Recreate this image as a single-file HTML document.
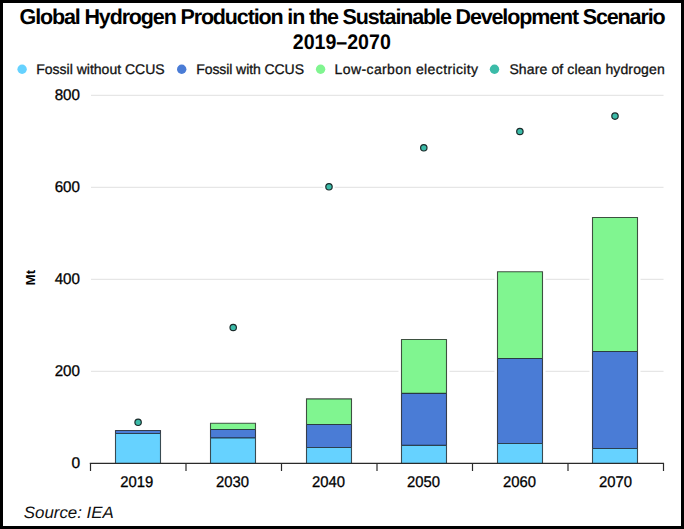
<!DOCTYPE html>
<html><head><meta charset="utf-8"><style>
html,body{margin:0;padding:0;background:#fff;}
body{width:684px;height:529px;overflow:hidden;position:relative;}
svg{position:absolute;left:0;top:0;}
text{font-family:"Liberation Sans", sans-serif;text-rendering:geometricPrecision;}
</style></head><body>
<svg width="684" height="529" viewBox="0 0 684 529">
<rect x="0" y="0" width="684" height="529" fill="#fff"/>

<text x="19.6" y="24" font-weight="bold" font-size="21.5" textLength="646" lengthAdjust="spacing" fill="#000">Global Hydrogen Production in the Sustainable Development Scenario</text>
<text x="292.8" y="49" font-weight="bold" font-size="21" textLength="98" lengthAdjust="spacingAndGlyphs" fill="#000">2019–2070</text>
<circle cx="22.1" cy="69.3" r="4.7" fill="#66d2ff"/>
<text x="36.2" y="73.8" font-size="14" textLength="128.5" lengthAdjust="spacing" fill="#111" stroke="#111" stroke-width="0.3">Fossil without CCUS</text>
<circle cx="181.7" cy="69.3" r="4.7" fill="#4a7cd6"/>
<text x="196.2" y="73.8" font-size="14" textLength="107.8" lengthAdjust="spacing" fill="#111" stroke="#111" stroke-width="0.3">Fossil with CCUS</text>
<circle cx="320.6" cy="69.3" r="4.7" fill="#80f590"/>
<text x="334.6" y="73.8" font-size="14" textLength="143.5" lengthAdjust="spacing" fill="#111" stroke="#111" stroke-width="0.3">Low-carbon electricity</text>
<circle cx="494.5" cy="69.3" r="4.7" fill="#3bbba8"/>
<text x="509.4" y="73.8" font-size="14" textLength="155.3" lengthAdjust="spacing" fill="#111" stroke="#111" stroke-width="0.3">Share of clean hydrogen</text>
<line x1="91" y1="95.3" x2="663.5" y2="95.3" stroke="#e6e6e6" stroke-width="1.2"/>
<line x1="91" y1="187.3" x2="663.5" y2="187.3" stroke="#e6e6e6" stroke-width="1.2"/>
<line x1="91" y1="279.3" x2="663.5" y2="279.3" stroke="#e6e6e6" stroke-width="1.2"/>
<line x1="91" y1="371.3" x2="663.5" y2="371.3" stroke="#e6e6e6" stroke-width="1.2"/>
<text x="80" y="100.1" font-size="15.5" text-anchor="end" textLength="25.3" lengthAdjust="spacingAndGlyphs" fill="#000" stroke="#000" stroke-width="0.3">800</text>
<text x="80" y="192.1" font-size="15.5" text-anchor="end" textLength="25.3" lengthAdjust="spacingAndGlyphs" fill="#000" stroke="#000" stroke-width="0.3">600</text>
<text x="80" y="284.1" font-size="15.5" text-anchor="end" textLength="25.3" lengthAdjust="spacingAndGlyphs" fill="#000" stroke="#000" stroke-width="0.3">400</text>
<text x="80" y="376.1" font-size="15.5" text-anchor="end" textLength="25.3" lengthAdjust="spacingAndGlyphs" fill="#000" stroke="#000" stroke-width="0.3">200</text>
<text x="80" y="468.1" font-size="15.5" text-anchor="end" fill="#000" stroke="#000" stroke-width="0.3">0</text>
<rect x="112.5" y="427.5" width="51.0" height="32.50" fill="#fff"/>
<rect x="207.5" y="420.3" width="51.0" height="39.70" fill="#fff"/>
<rect x="303.5" y="395.9" width="51.0" height="64.10" fill="#fff"/>
<rect x="398.5" y="336.5" width="51.0" height="123.50" fill="#fff"/>
<rect x="494.5" y="268.7" width="51.0" height="191.30" fill="#fff"/>
<rect x="589.5" y="214.5" width="51.0" height="245.50" fill="#fff"/>
<circle cx="138.1" cy="422.3" r="5.8" fill="#fff"/>
<circle cx="233.2" cy="327.5" r="5.8" fill="#fff"/>
<circle cx="329.0" cy="186.8" r="5.8" fill="#fff"/>
<circle cx="423.8" cy="147.8" r="5.8" fill="#fff"/>
<circle cx="519.9" cy="131.5" r="5.8" fill="#fff"/>
<circle cx="615.0" cy="116.1" r="5.8" fill="#fff"/>
<rect x="115.5" y="430.5" width="45.0" height="3.00" fill="#4a7cd6"/>
<rect x="115.5" y="433.5" width="45.0" height="29.50" fill="#66d2ff"/>
<path d="M115.5 463.0V430.5H160.5V463.0M115.5 433.5H160.5" fill="none" stroke="#000" stroke-opacity="0.68" stroke-width="1.1"/>
<rect x="210.5" y="423.3" width="45.0" height="6.20" fill="#80f590"/>
<rect x="210.5" y="429.5" width="45.0" height="8.40" fill="#4a7cd6"/>
<rect x="210.5" y="437.9" width="45.0" height="25.10" fill="#66d2ff"/>
<path d="M210.5 463.0V423.3H255.5V463.0M210.5 429.5H255.5M210.5 437.9H255.5" fill="none" stroke="#000" stroke-opacity="0.68" stroke-width="1.1"/>
<rect x="306.5" y="398.9" width="45.0" height="25.60" fill="#80f590"/>
<rect x="306.5" y="424.5" width="45.0" height="23.00" fill="#4a7cd6"/>
<rect x="306.5" y="447.5" width="45.0" height="15.50" fill="#66d2ff"/>
<path d="M306.5 463.0V398.9H351.5V463.0M306.5 424.5H351.5M306.5 447.5H351.5" fill="none" stroke="#000" stroke-opacity="0.68" stroke-width="1.1"/>
<rect x="401.5" y="339.5" width="45.0" height="53.90" fill="#80f590"/>
<rect x="401.5" y="393.4" width="45.0" height="52.00" fill="#4a7cd6"/>
<rect x="401.5" y="445.4" width="45.0" height="17.60" fill="#66d2ff"/>
<path d="M401.5 463.0V339.5H446.5V463.0M401.5 393.4H446.5M401.5 445.4H446.5" fill="none" stroke="#000" stroke-opacity="0.68" stroke-width="1.1"/>
<rect x="497.5" y="271.7" width="45.0" height="86.80" fill="#80f590"/>
<rect x="497.5" y="358.5" width="45.0" height="85.00" fill="#4a7cd6"/>
<rect x="497.5" y="443.5" width="45.0" height="19.50" fill="#66d2ff"/>
<path d="M497.5 463.0V271.7H542.5V463.0M497.5 358.5H542.5M497.5 443.5H542.5" fill="none" stroke="#000" stroke-opacity="0.68" stroke-width="1.1"/>
<rect x="592.5" y="217.5" width="45.0" height="134.00" fill="#80f590"/>
<rect x="592.5" y="351.5" width="45.0" height="97.00" fill="#4a7cd6"/>
<rect x="592.5" y="448.5" width="45.0" height="14.50" fill="#66d2ff"/>
<path d="M592.5 463.0V217.5H637.5V463.0M592.5 351.5H637.5M592.5 448.5H637.5" fill="none" stroke="#000" stroke-opacity="0.68" stroke-width="1.1"/>
<line x1="89.8" y1="463.3" x2="664" y2="463.3" stroke="#2a2a2a" stroke-width="1.2"/>
<line x1="90.50" y1="463.0" x2="90.50" y2="471" stroke="#2a2a2a" stroke-width="1.2"/>
<line x1="186.00" y1="463.0" x2="186.00" y2="471" stroke="#2a2a2a" stroke-width="1.2"/>
<line x1="281.50" y1="463.0" x2="281.50" y2="471" stroke="#2a2a2a" stroke-width="1.2"/>
<line x1="377.00" y1="463.0" x2="377.00" y2="471" stroke="#2a2a2a" stroke-width="1.2"/>
<line x1="472.50" y1="463.0" x2="472.50" y2="471" stroke="#2a2a2a" stroke-width="1.2"/>
<line x1="568.00" y1="463.0" x2="568.00" y2="471" stroke="#2a2a2a" stroke-width="1.2"/>
<line x1="663.50" y1="463.0" x2="663.50" y2="471" stroke="#2a2a2a" stroke-width="1.2"/>
<text x="0" y="0" font-size="15.5" text-anchor="middle" textLength="33" lengthAdjust="spacingAndGlyphs" fill="#000" stroke="#000" stroke-width="0.3" transform="translate(136.65 487) scale(1 1)">2019</text>
<text x="0" y="0" font-size="15.5" text-anchor="middle" textLength="33" lengthAdjust="spacingAndGlyphs" fill="#000" stroke="#000" stroke-width="0.3" transform="translate(232.45 487) scale(1 1)">2030</text>
<text x="0" y="0" font-size="15.5" text-anchor="middle" textLength="33" lengthAdjust="spacingAndGlyphs" fill="#000" stroke="#000" stroke-width="0.3" transform="translate(328.45 487) scale(1 1)">2040</text>
<text x="0" y="0" font-size="15.5" text-anchor="middle" textLength="33" lengthAdjust="spacingAndGlyphs" fill="#000" stroke="#000" stroke-width="0.3" transform="translate(423.45 487) scale(1 1)">2050</text>
<text x="0" y="0" font-size="15.5" text-anchor="middle" textLength="33" lengthAdjust="spacingAndGlyphs" fill="#000" stroke="#000" stroke-width="0.3" transform="translate(519.45 487) scale(1 1)">2060</text>
<text x="0" y="0" font-size="15.5" text-anchor="middle" textLength="33" lengthAdjust="spacingAndGlyphs" fill="#000" stroke="#000" stroke-width="0.3" transform="translate(615.55 487) scale(1 1)">2070</text>
<circle cx="138.1" cy="422.3" r="3.2" fill="#3bbba8" stroke="#1b2b2b" stroke-width="1.2"/>
<circle cx="233.2" cy="327.5" r="3.2" fill="#3bbba8" stroke="#1b2b2b" stroke-width="1.2"/>
<circle cx="329.0" cy="186.8" r="3.2" fill="#3bbba8" stroke="#1b2b2b" stroke-width="1.2"/>
<circle cx="423.8" cy="147.8" r="3.2" fill="#3bbba8" stroke="#1b2b2b" stroke-width="1.2"/>
<circle cx="519.9" cy="131.5" r="3.2" fill="#3bbba8" stroke="#1b2b2b" stroke-width="1.2"/>
<circle cx="615.0" cy="116.1" r="3.2" fill="#3bbba8" stroke="#1b2b2b" stroke-width="1.2"/>
<text x="0" y="0" font-size="13" font-weight="bold" text-anchor="middle" fill="#000" transform="translate(35.3 277.6) rotate(-90)">Mt</text>
<text x="23.8" y="517.5" font-size="16.5" font-style="italic" textLength="90" lengthAdjust="spacingAndGlyphs" fill="#111">Source: IEA</text>
<rect x="1.5" y="1.5" width="681" height="526" fill="none" stroke="#000" stroke-width="3"/>
</svg></body></html>
